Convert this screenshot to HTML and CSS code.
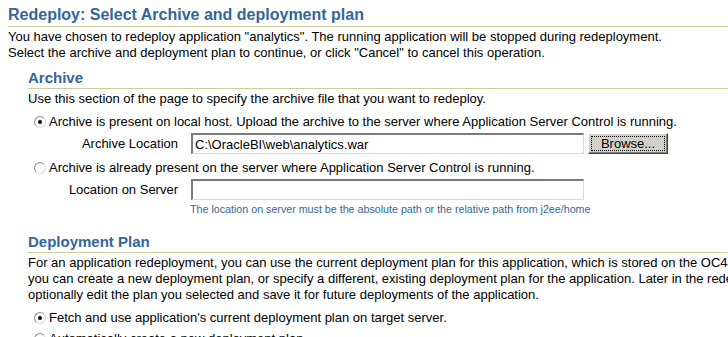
FILE: index.html
```html
<!DOCTYPE html>
<html>
<head>
<meta charset="utf-8">
<link rel="stylesheet" href="styles.css">
</head>
<body>
<div class="page">
  <h1 class="title">Redeploy: Select Archive and deployment plan</h1>
  <p class="text intro">You have chosen to redeploy application "analytics". The running application will be stopped during redeployment.<br>Select the archive and deployment plan to continue, or click "Cancel" to cancel this operation.</p>

  <div class="section">
    <h2 class="subtitle">Archive</h2>
    <p class="text">Use this section of the page to specify the archive file that you want to redeploy.</p>

    <label class="choice"><input type="radio" name="arch" class="radio" checked><span>Archive is present on local host. Upload the archive to the server where Application Server Control is running.</span></label>
    <div class="field">
      <span class="label">Archive Location</span>
      <input type="text" class="input" value="C:\OracleBI\web\analytics.war">
      <button class="btn"><span class="btn-focus">Browse...</span></button>
    </div>

    <label class="choice after-field"><input type="radio" name="arch" class="radio"><span>Archive is already present on the server where Application Server Control is running.</span></label>
    <div class="field">
      <span class="label">Location on Server</span>
      <input type="text" class="input" value="">
    </div>
    <div class="hint">The location on server must be the absolute path or the relative path from j2ee/home</div>
  </div>

  <div class="section plan">
    <h2 class="subtitle">Deployment Plan</h2>
    <p class="text">For an application redeployment, you can use the current deployment plan for this application, which is stored on the OC4J server. Alternatively,<br>you can create a new deployment plan, or specify a different, existing deployment plan for the application. Later in the redeployment process, you can<br>optionally edit the plan you selected and save it for future deployments of the application.</p>
    <label class="choice"><input type="radio" name="plan" class="radio" checked><span>Fetch and use application's current deployment plan on target server.</span></label>
    <label class="choice next"><input type="radio" name="plan" class="radio"><span>Automatically create a new deployment plan.</span></label>
  </div>
</div>
</body>
</html>
```

FILE: styles.css
```css
html, body {
  margin: 0;
  padding: 0;
  background: #ffffff;
  overflow: hidden;
}

.page {
  width: 1100px;
  padding: 6px 0 0 8px;
  font-family: "Liberation Sans", Arial, sans-serif;
  color: #000000;
}

.title {
  margin: 0;
  font-size: 16px;
  font-weight: bold;
  color: #336699;
  line-height: 18px;
  padding-bottom: 2px;
  border-bottom: 1px solid #cccc99;
}

.text {
  margin: 0;
  font-size: 13px;
  line-height: 16px;
  white-space: nowrap;
}

.intro {
  margin-top: 2px;
}

.section {
  padding-left: 20px;
  margin-top: 8px;
}

.subtitle {
  margin: 0 0 2px 0;
  font-size: 15px;
  font-weight: bold;
  color: #336699;
  line-height: 18px;
  padding-bottom: 1px;
  border-bottom: 1px solid #cccc99;
}

.choice {
  display: flex;
  align-items: center;
  gap: 3px;
  font-size: 13px;
  line-height: 16px;
  white-space: nowrap;
  margin-top: 7px;
  padding-left: 6px;
}

.choice.after-field {
  margin-top: 6px;
}

.choice.next {
  margin-top: 5px;
}

.radio {
  appearance: none;
  -webkit-appearance: none;
  margin: 0;
  width: 12px;
  height: 12px;
  border-radius: 50%;
  border: 1px solid;
  border-color: #8c8c8c #dcdcdc #dcdcdc #8c8c8c;
  background: #ffffff;
  box-sizing: border-box;
  position: relative;
  flex: none;
}

.radio:checked::after {
  content: "";
  position: absolute;
  left: 3px;
  top: 3px;
  width: 4px;
  height: 4px;
  border-radius: 50%;
  background: #000000;
}

.field {
  display: flex;
  align-items: center;
  margin-top: 3px;
  font-size: 13px;
}

.label {
  width: 163px;
  text-align: right;
  padding-right: 13px;
  box-sizing: border-box;
  flex: none;
}

.input {
  width: 393px;
  height: 21px;
  box-sizing: border-box;
  margin: 0;
  padding: 0 2px;
  font-family: "Liberation Sans", Arial, sans-serif;
  font-size: 13px;
  color: #000000;
  border-style: solid;
  border-width: 2px 1px 1px 2px;
  border-color: #7a7a7a #d8d8d8 #d8d8d8 #7a7a7a;
  background: #ffffff;
  outline: none;
}

.btn {
  margin: 0 0 0 4px;
  width: 80px;
  height: 21px;
  padding: 2px;
  box-sizing: border-box;
  background: #d4d0c8;
  border: 1px solid;
  border-color: #ffffff #404040 #404040 #ffffff;
  box-shadow: inset -1px -1px #808080;
  font-family: "Liberation Sans", Arial, sans-serif;
  font-size: 13px;
  color: #000000;
  display: flex;
}

.btn-focus {
  flex: 1;
  border: 1px dotted #000000;
  line-height: 13px;
  text-align: center;
}

.hint {
  margin: 3px 0 0 162px;
  font-size: 10.7px;
  line-height: 12px;
  color: #336699;
  white-space: nowrap;
}

.plan {
  margin-top: 18px;
}
```
